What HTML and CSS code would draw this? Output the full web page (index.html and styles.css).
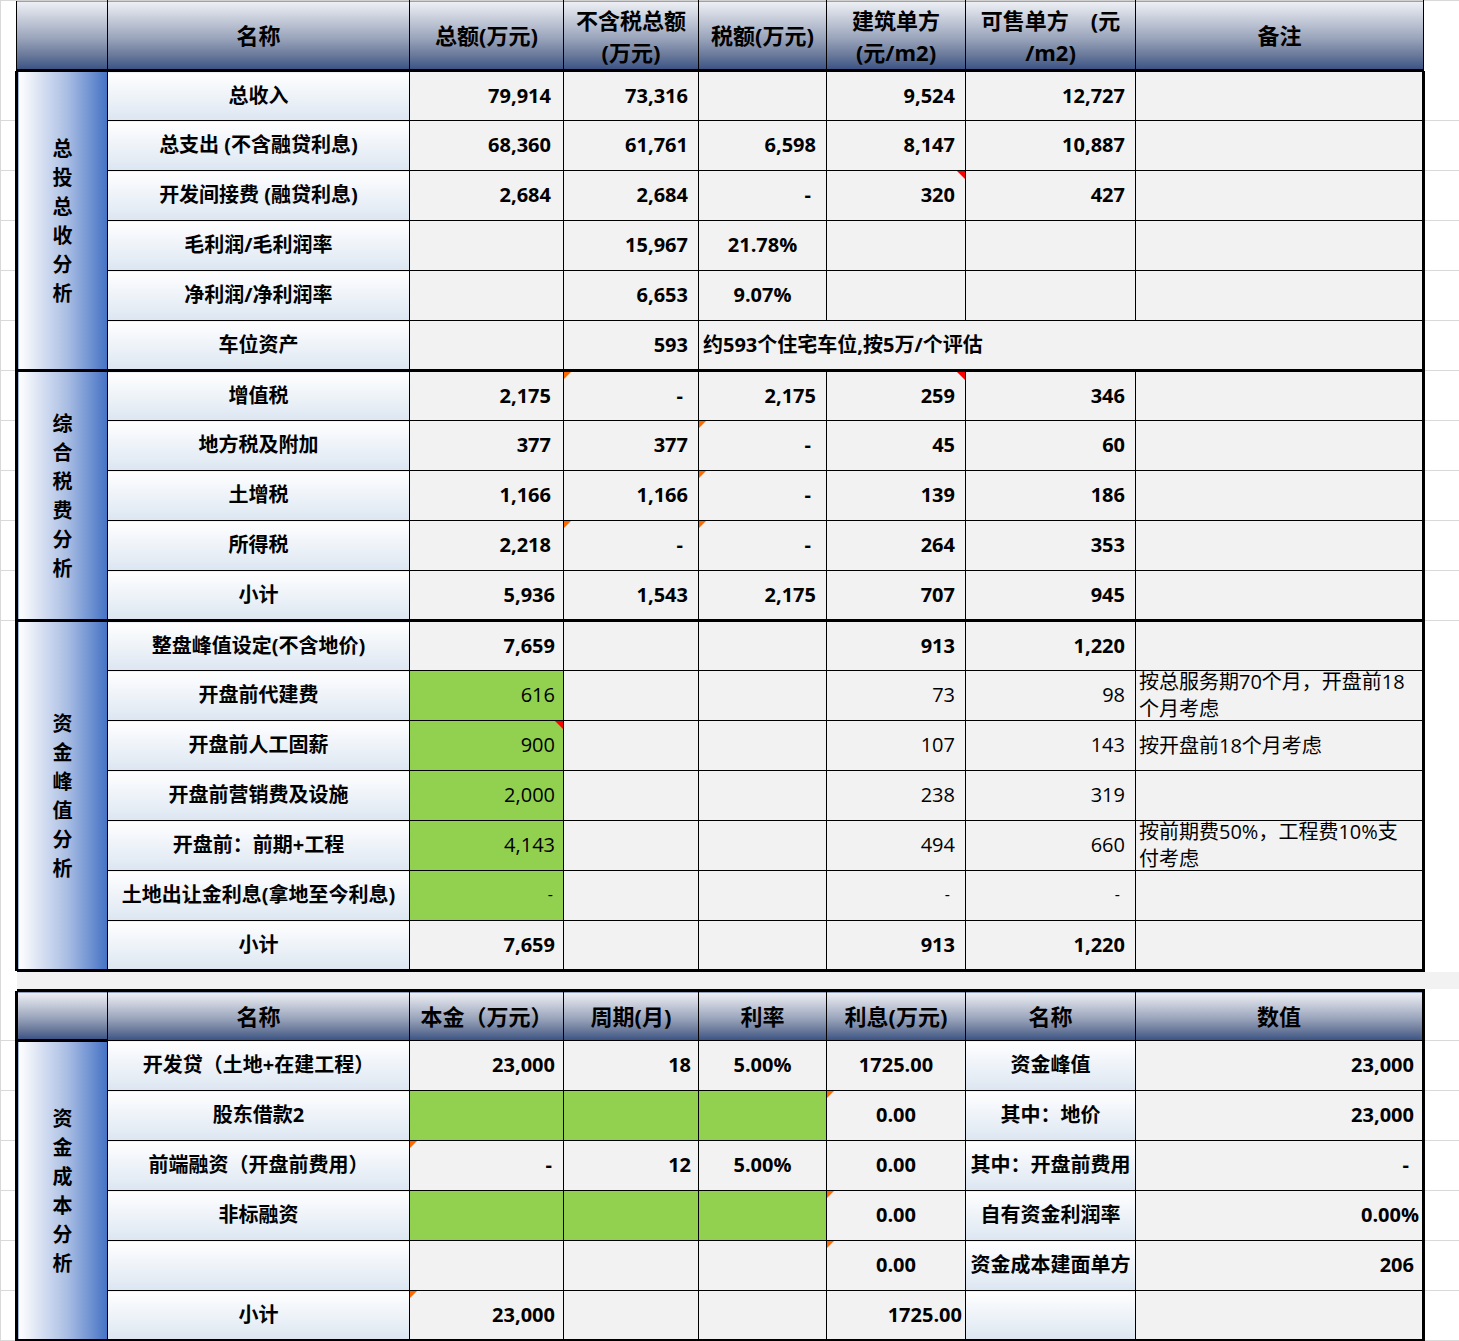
FILE: index.html
```html
<!DOCTYPE html>
<html lang="zh-CN">
<head>
<meta charset="utf-8">
<title>资金测算表</title>
<link rel="stylesheet" href="styles.css">
</head>
<body>
<table class="sheet">
  <colgroup>
    <col class="w-gl"><col class="w-a"><col class="w-b"><col class="w-c"><col class="w-d">
    <col class="w-e"><col class="w-f"><col class="w-g"><col class="w-h"><col class="w-gr">
  </colgroup>
  <tbody>
    <!-- Header 1 -->
    <tr class="hdr">
      <td class="gut l top"></td>
      <th class="hd"></th>
      <th class="hd">名称</th>
      <th class="hd">总额(万元)</th>
      <th class="hd two">不含税总额<br>(万元)</th>
      <th class="hd">税额(万元)</th>
      <th class="hd two">建筑单方<br>(元/m2)</th>
      <th class="hd two">可售单方　(元<br>/m2)</th>
      <th class="hd">备注</th>
      <td class="gut top"></td>
    </tr>

    <!-- Group 1 -->
    <tr class="row gtop">
      <td class="gut l"></td>
      <td class="cat" rowspan="6"><span class="vt">总投总收分析</span></td>
      <td class="name">总收入</td>
      <td class="n pr12">79,914</td>
      <td class="n">73,316</td>
      <td class="n"></td>
      <td class="n">9,524</td>
      <td class="n">12,727</td>
      <td class="note end"></td>
      <td class="gut r"></td>
    </tr>
    <tr class="row">
      <td class="gut l"></td>
      <td class="name">总支出 (不含融贷利息)</td>
      <td class="n pr12">68,360</td>
      <td class="n">61,761</td>
      <td class="n">6,598</td>
      <td class="n">8,147</td>
      <td class="n">10,887</td>
      <td class="note end"></td>
      <td class="gut r"></td>
    </tr>
    <tr class="row">
      <td class="gut l"></td>
      <td class="name">开发间接费 (融贷利息)</td>
      <td class="n pr12">2,684</td>
      <td class="n">2,684</td>
      <td class="n dash">-</td>
      <td class="n cm-r">320</td>
      <td class="n">427</td>
      <td class="note end"></td>
      <td class="gut r"></td>
    </tr>
    <tr class="row">
      <td class="gut l"></td>
      <td class="name">毛利润/毛利润率</td>
      <td class="n"></td>
      <td class="n">15,967</td>
      <td class="c">21.78%</td>
      <td class="n"></td>
      <td class="n"></td>
      <td class="note end"></td>
      <td class="gut r"></td>
    </tr>
    <tr class="row">
      <td class="gut l"></td>
      <td class="name">净利润/净利润率</td>
      <td class="n"></td>
      <td class="n">6,653</td>
      <td class="c">9.07%</td>
      <td class="n"></td>
      <td class="n"></td>
      <td class="note end"></td>
      <td class="gut r"></td>
    </tr>
    <tr class="row">
      <td class="gut l"></td>
      <td class="name">车位资产</td>
      <td class="n"></td>
      <td class="n">593</td>
      <td class="txt end" colspan="4">约593个住宅车位,按5万/个评估</td>
      <td class="gut r"></td>
    </tr>

    <!-- Group 2 -->
    <tr class="row gtop">
      <td class="gut l"></td>
      <td class="cat" rowspan="5"><span class="vt">综合税费分析</span></td>
      <td class="name">增值税</td>
      <td class="n pr12">2,175</td>
      <td class="n dash cm-l">-</td>
      <td class="n">2,175</td>
      <td class="n cm-r">259</td>
      <td class="n">346</td>
      <td class="note end"></td>
      <td class="gut r"></td>
    </tr>
    <tr class="row">
      <td class="gut l"></td>
      <td class="name">地方税及附加</td>
      <td class="n pr12">377</td>
      <td class="n">377</td>
      <td class="n dash cm-l">-</td>
      <td class="n">45</td>
      <td class="n">60</td>
      <td class="note end"></td>
      <td class="gut r"></td>
    </tr>
    <tr class="row">
      <td class="gut l"></td>
      <td class="name">土增税</td>
      <td class="n pr12">1,166</td>
      <td class="n">1,166</td>
      <td class="n dash cm-l">-</td>
      <td class="n">139</td>
      <td class="n">186</td>
      <td class="note end"></td>
      <td class="gut r"></td>
    </tr>
    <tr class="row">
      <td class="gut l"></td>
      <td class="name">所得税</td>
      <td class="n pr12">2,218</td>
      <td class="n dash cm-l">-</td>
      <td class="n dash cm-l">-</td>
      <td class="n">264</td>
      <td class="n">353</td>
      <td class="note end"></td>
      <td class="gut r"></td>
    </tr>
    <tr class="row">
      <td class="gut l"></td>
      <td class="name">小计</td>
      <td class="n pr8">5,936</td>
      <td class="n">1,543</td>
      <td class="n">2,175</td>
      <td class="n">707</td>
      <td class="n">945</td>
      <td class="note end"></td>
      <td class="gut r"></td>
    </tr>

    <!-- Group 3 -->
    <tr class="row gtop">
      <td class="gut l plain"></td>
      <td class="cat" rowspan="7"><span class="vt">资金峰值分析</span></td>
      <td class="name">整盘峰值设定(不含地价)</td>
      <td class="n pr8">7,659</td>
      <td class="n"></td>
      <td class="n"></td>
      <td class="n">913</td>
      <td class="n">1,220</td>
      <td class="note end"></td>
      <td class="gut plain"></td>
    </tr>
    <tr class="row">
      <td class="gut l plain"></td>
      <td class="name">开盘前代建费</td>
      <td class="n pr8 reg green">616</td>
      <td class="n"></td>
      <td class="n"></td>
      <td class="n reg">73</td>
      <td class="n reg">98</td>
      <td class="note end reg"><span class="wrap">按总服务期70个月，开盘前18个月考虑</span></td>
      <td class="gut plain"></td>
    </tr>
    <tr class="row">
      <td class="gut l plain"></td>
      <td class="name">开盘前人工固薪</td>
      <td class="n pr8 reg green cm-r">900</td>
      <td class="n"></td>
      <td class="n"></td>
      <td class="n reg">107</td>
      <td class="n reg">143</td>
      <td class="note end reg">按开盘前18个月考虑</td>
      <td class="gut plain"></td>
    </tr>
    <tr class="row">
      <td class="gut l plain"></td>
      <td class="name">开盘前营销费及设施</td>
      <td class="n pr8 reg green">2,000</td>
      <td class="n"></td>
      <td class="n"></td>
      <td class="n reg">238</td>
      <td class="n reg">319</td>
      <td class="note end reg"></td>
      <td class="gut plain"></td>
    </tr>
    <tr class="row">
      <td class="gut l plain"></td>
      <td class="name">开盘前：前期+工程</td>
      <td class="n pr8 reg green">4,143</td>
      <td class="n"></td>
      <td class="n"></td>
      <td class="n reg">494</td>
      <td class="n reg">660</td>
      <td class="note end reg"><span class="wrap">按前期费50%，工程费10%支付考虑</span></td>
      <td class="gut plain"></td>
    </tr>
    <tr class="row">
      <td class="gut l plain"></td>
      <td class="name">土地出让金利息(拿地至今利息)</td>
      <td class="n reg green small">-</td>
      <td class="n"></td>
      <td class="n"></td>
      <td class="n reg dash small">-</td>
      <td class="n reg dash small">-</td>
      <td class="note end"></td>
      <td class="gut plain"></td>
    </tr>
    <tr class="row gbot">
      <td class="gut l plain"></td>
      <td class="name">小计</td>
      <td class="n pr8">7,659</td>
      <td class="n"></td>
      <td class="n"></td>
      <td class="n">913</td>
      <td class="n">1,220</td>
      <td class="note end"></td>
      <td class="gut plain"></td>
    </tr>

    <!-- Gap between tables -->
    <tr class="gap">
      <td class="gut l plain"></td>
      <td class="gapcell" colspan="9"></td>
    </tr>

    <!-- Header 2 -->
    <tr class="row hdr2">
      <td class="gut l"></td>
      <th class="hd start"></th>
      <th class="hd">名称</th>
      <th class="hd">本金（万元）</th>
      <th class="hd">周期(月)</th>
      <th class="hd">利率</th>
      <th class="hd">利息(万元)</th>
      <th class="hd">名称</th>
      <th class="hd end">数值</th>
      <td class="gut r"></td>
    </tr>

    <!-- Group 4 -->
    <tr class="row">
      <td class="gut l"></td>
      <td class="cat" rowspan="6"><span class="vt">资金成本分析</span></td>
      <td class="name">开发贷（土地+在建工程）</td>
      <td class="n pr8">23,000</td>
      <td class="n pr7">18</td>
      <td class="c">5.00%</td>
      <td class="c">1725.00</td>
      <td class="name">资金峰值</td>
      <td class="n pr8 end">23,000</td>
      <td class="gut r"></td>
    </tr>
    <tr class="row">
      <td class="gut l"></td>
      <td class="name">股东借款2</td>
      <td class="green"></td>
      <td class="green"></td>
      <td class="green"></td>
      <td class="c cm-l">0.00</td>
      <td class="name">其中：地价</td>
      <td class="n pr8 end">23,000</td>
      <td class="gut r"></td>
    </tr>
    <tr class="row">
      <td class="gut l"></td>
      <td class="name">前端融资（开盘前费用）</td>
      <td class="n pr11 cm-l">-</td>
      <td class="n pr7">12</td>
      <td class="c">5.00%</td>
      <td class="c">0.00</td>
      <td class="name">其中：开盘前费用</td>
      <td class="n pr13 end">-</td>
      <td class="gut r"></td>
    </tr>
    <tr class="row">
      <td class="gut l"></td>
      <td class="name">非标融资</td>
      <td class="green"></td>
      <td class="green"></td>
      <td class="green"></td>
      <td class="c cm-l">0.00</td>
      <td class="name">自有资金利润率</td>
      <td class="n pr3 end">0.00%</td>
      <td class="gut r"></td>
    </tr>
    <tr class="row">
      <td class="gut l"></td>
      <td class="name"></td>
      <td class="n"></td>
      <td class="n"></td>
      <td class="n"></td>
      <td class="c cm-l">0.00</td>
      <td class="name">资金成本建面单方</td>
      <td class="n pr8 end">206</td>
      <td class="gut r"></td>
    </tr>
    <tr class="row gbot">
      <td class="gut l"></td>
      <td class="name">小计</td>
      <td class="n pr8 cm-l">23,000</td>
      <td class="n"></td>
      <td class="n"></td>
      <td class="n pr3">1725.00</td>
      <td class="name"></td>
      <td class="n end"></td>
      <td class="gut r"></td>
    </tr>
  </tbody>
</table>
</body>
</html>
```

FILE: styles.css
```css
* {
  box-sizing: border-box;
}

html,
body {
  margin: 0;
  padding: 0;
  background: #ffffff;
}

body {
  font-family: "Open Sans", "Noto Sans CJK SC", sans-serif;
  font-size: 20px;
  color: #000000;
}

.sheet {
  border-collapse: collapse;
  table-layout: fixed;
  width: 1459px;
}

.w-gl { width: 16px; }
.w-a { width: 91px; }
.w-b { width: 302px; }
.w-c { width: 154px; }
.w-d { width: 135px; }
.w-e { width: 128px; }
.w-f { width: 139px; }
.w-g { width: 170px; }
.w-h { width: 288px; }
.w-gr { width: 36px; }

.sheet td,
.sheet th {
  border: 1px solid #000000;
  padding: 0 10px 2px 3px;
  font-weight: 700;
  white-space: nowrap;
  vertical-align: middle;
  background: #f2f2f2;
  position: relative;
  line-height: 27px;
}

/* row sizes */
.hdr { height: 70px; }
.row { height: 50px; }
.gap { height: 20px; }

/* spreadsheet gutters with light gridlines */
.sheet td.gut {
  background: #ffffff;
  border: none;
  border-bottom: 1px solid #d9d9d9;
  padding: 0;
}
.sheet td.gut.l { border-left: 1px solid #d9d9d9; }
.sheet td.gut.r { border-right: 1px solid #d9d9d9; }
.sheet td.gut.top { border-top: 1px solid #d9d9d9; border-bottom: none; }
.sheet td.gut.plain { border-bottom: none; }

/* header cells */
.sheet th.hd {
  background: linear-gradient(to bottom, #eef0f5 0%, #c3c9d7 28%, #98a3ba 55%, #6c7b9c 78%, #3a5283 100%);
  text-align: center;
  padding: 0;
  font-size: 22px;
  line-height: 32px;
  border-top: 1px solid #d0d0d0;
}
.hdr th.hd.two { padding-top: 2px; }
.hdr2 th.hd { border-top: 3px solid #000000; }
.hdr2 th.hd.start { border-left: 3px solid #000000; }
.hdr2 th.hd.end { border-right: 3px solid #000000; }

/* category (vertical) cells */
.sheet td.cat {
  background: linear-gradient(to right, #ffffff 0%, #a9bde3 55%, #4472c4 100%);
  text-align: center;
  padding: 0;
  border-left: 3px solid #000000;
  border-top: 3px solid #000000;
  border-bottom: 3px solid #000000;
}
.vt {
  display: inline-block;
  width: 20px;
  line-height: 29px;
  white-space: normal;
  word-break: break-all;
}

/* name cells */
.sheet td.name {
  background: linear-gradient(to bottom, #ffffff 0%, #dce6f1 100%);
  text-align: center;
  padding: 0 0 2px;
}

/* group borders */
.gtop td:not(.gut) { border-top: 3px solid #000000; }
.gbot td:not(.gut) { border-bottom: 3px solid #000000; }
.sheet td.end { border-right: 3px solid #000000; }

/* gap band between tables */
.sheet td.gapcell {
  background: #f2f2f2;
  border: none;
  padding: 0;
}

/* value alignment */
.n { text-align: right; }
.c { text-align: center; }
.sheet td.c { padding: 0 0 2px; }
.sheet td.txt { text-align: left; padding-left: 4px; }
.sheet td.note {
  text-align: left;
  white-space: normal;
  padding: 0 8px 0 3px;
}
.wrap {
  display: block;
  margin: -5px 0 -3px;
}

.sheet td.reg { font-weight: 400; }
.sheet td.small { font-size: 16px; }
.sheet td.green { background: #92d050; }

.sheet td.pr3 { padding-right: 3px; }
.sheet td.pr4 { padding-right: 4px; }
.sheet td.pr7 { padding-right: 7px; }
.sheet td.pr8 { padding-right: 8px; }
.sheet td.pr11 { padding-right: 11px; }
.sheet td.pr12 { padding-right: 12px; }
.sheet td.pr13 { padding-right: 13px; }
.sheet td.dash { padding-right: 15px; }

/* comment indicators */
.cm-l::before {
  content: "";
  position: absolute;
  top: 0;
  left: 0;
  border-style: solid;
  border-width: 7px 7px 0 0;
  border-color: #ff6a00 transparent transparent transparent;
}
.cm-r::after {
  content: "";
  position: absolute;
  top: 0;
  right: 0;
  border-style: solid;
  border-width: 0 8px 8px 0;
  border-color: transparent #ff0000 transparent transparent;
}
```
